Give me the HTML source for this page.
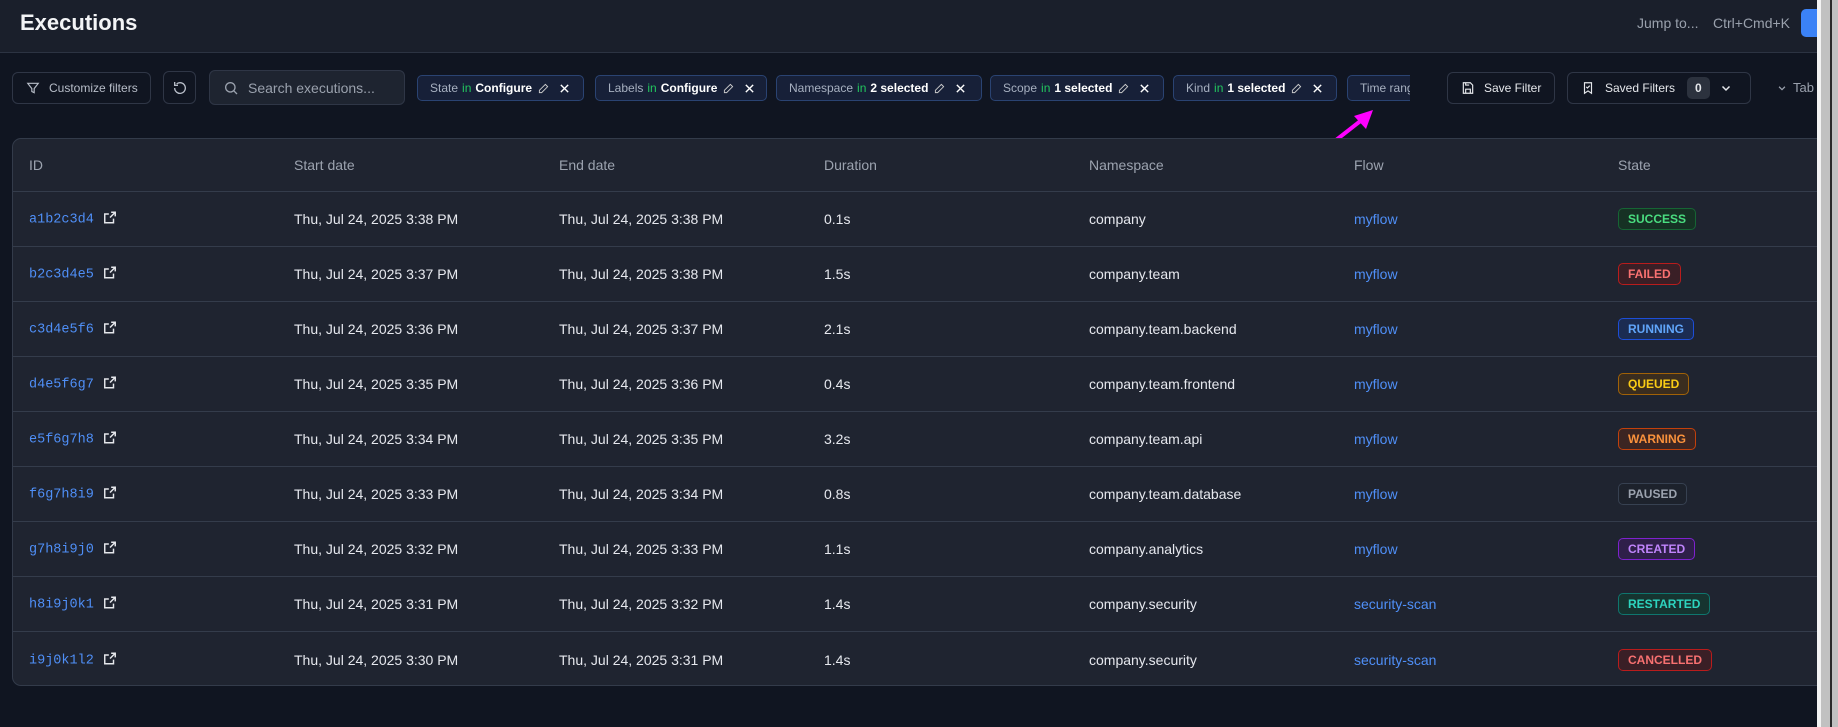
<!DOCTYPE html>
<html><head><meta charset="utf-8"><style>
*{box-sizing:border-box;margin:0;padding:0}
body{width:1838px;height:727px;background:#101521;font-family:"Liberation Sans",sans-serif;color:#e6e8ee;position:relative;overflow:hidden}
.hdr{position:absolute;left:0;top:0;width:1817px;height:53px;background:#1a1f2b;border-bottom:1px solid #2c3342}
.hdr h1{position:absolute;left:20px;top:10px;font-size:22px;font-weight:bold;color:#f3f4f6}
.jump{position:absolute;top:15px;font-size:14px;color:#9aa1ad}
.bluebtn{position:absolute;left:1801px;top:9px;width:20px;height:28px;background:#3b82f6;border-radius:5px 0 0 5px}
.sb{position:absolute;left:1817px;top:0;width:21px;height:727px;background:#c1c1c1;border-left:4px solid #f3f3f3}
.sb:after{content:"";position:absolute;left:9px;top:0;width:2px;height:727px;background:#2a2a2a}
.btn{position:absolute;border:1px solid #2f3646;border-radius:6px;display:flex;align-items:center;font-size:12px;color:#b7bdc8}
.chip{position:absolute;top:75px;height:26px;border:1px solid #2a4372;background:#172038;border-radius:5px;display:flex;align-items:center;padding-left:12px;font-size:12px;color:#a7b0c0;white-space:nowrap;overflow:hidden}
.chip .g{color:#22c55e;margin:0 4px}
.chip b{color:#fff}
.chip svg{margin-left:6px}
.tbl{position:absolute;left:12px;top:138px;width:1830px;height:548px;background:#1f2430;border:1px solid #333b4a;border-radius:9px}
.row{position:absolute;left:0;width:1810px;height:55px;border-bottom:1px solid #343c4b;font-size:14px}
.row span{position:absolute;top:50%;transform:translateY(-50%);white-space:nowrap}
.th{color:#9ca3af}
.id{font-family:"Liberation Mono",monospace;color:#4f8ff7;font-size:13.5px}
.fl{color:#4f8ff7}
.bd{font-size:12px;font-weight:bold;padding:3px 9px;border-radius:5px;border:1px solid}
</style></head><body>
<div class="hdr"><h1>Executions</h1>
<span class="jump" style="left:1637px">Jump to...</span>
<span class="jump" style="left:1713px">Ctrl+Cmd+K</span>
<div class="bluebtn"></div></div>

<div class="btn" style="left:12px;top:72px;width:139px;height:32px;padding-left:13px">
<svg width="14" height="14" viewBox="0 0 24 24" fill="none" stroke="#b7bdc8" stroke-width="2"><path d="M3 4h18l-7 9v7l-4-2v-5z"/></svg><span style="margin-left:9px">Customize filters</span></div>
<div class="btn" style="left:163px;top:71px;width:33px;height:33px;justify-content:center">
<svg width="16" height="16" viewBox="0 0 24 24" fill="none" stroke="#b7bdc8" stroke-width="2"><path d="M4 12a8 8 0 1 0 3-6.2"/><path d="M4 3v5h5"/></svg></div>
<div class="btn" style="left:209px;top:70px;width:196px;height:35px;background:#1e2430;padding-left:13px;font-size:14px;color:#9aa1ad">
<svg width="16" height="16" viewBox="0 0 24 24" fill="none" stroke="#9aa1ad" stroke-width="2"><circle cx="11" cy="11" r="7"/><path d="M16 16l5 5"/></svg><span style="margin-left:9px">Search executions...</span></div>

<div class="chip" style="left:417px;width:167px">State<span class="g">in</span><b>Configure</b><svg width="11" height="11" viewBox="0 0 24 24" fill="none" stroke="#ccc" stroke-width="2"><path d="M16 3l5 5L8 21H3v-5z"/></svg><svg width="11" height="11" viewBox="0 0 24 24" stroke="#fff" stroke-width="3" style="margin-left:10px"><path d="M4 4l16 16M20 4L4 20"/></svg></div>
<div class="chip" style="left:595px;width:172px">Labels<span class="g">in</span><b>Configure</b><svg width="11" height="11" viewBox="0 0 24 24" fill="none" stroke="#ccc" stroke-width="2"><path d="M16 3l5 5L8 21H3v-5z"/></svg><svg width="11" height="11" viewBox="0 0 24 24" stroke="#fff" stroke-width="3" style="margin-left:10px"><path d="M4 4l16 16M20 4L4 20"/></svg></div>
<div class="chip" style="left:776px;width:206px">Namespace<span class="g">in</span><b>2 selected</b><svg width="11" height="11" viewBox="0 0 24 24" fill="none" stroke="#ccc" stroke-width="2"><path d="M16 3l5 5L8 21H3v-5z"/></svg><svg width="11" height="11" viewBox="0 0 24 24" stroke="#fff" stroke-width="3" style="margin-left:10px"><path d="M4 4l16 16M20 4L4 20"/></svg></div>
<div class="chip" style="left:990px;width:174px">Scope<span class="g">in</span><b>1 selected</b><svg width="11" height="11" viewBox="0 0 24 24" fill="none" stroke="#ccc" stroke-width="2"><path d="M16 3l5 5L8 21H3v-5z"/></svg><svg width="11" height="11" viewBox="0 0 24 24" stroke="#fff" stroke-width="3" style="margin-left:10px"><path d="M4 4l16 16M20 4L4 20"/></svg></div>
<div class="chip" style="left:1173px;width:164px">Kind<span class="g">in</span><b>1 selected</b><svg width="11" height="11" viewBox="0 0 24 24" fill="none" stroke="#ccc" stroke-width="2"><path d="M16 3l5 5L8 21H3v-5z"/></svg><svg width="11" height="11" viewBox="0 0 24 24" stroke="#fff" stroke-width="3" style="margin-left:10px"><path d="M4 4l16 16M20 4L4 20"/></svg></div>
<div class="chip" style="left:1347px;width:63px;border-right:none;border-radius:5px 0 0 5px">Time range</div>

<div class="btn" style="left:1447px;top:72px;width:108px;height:32px;padding-left:13px;color:#e5e7eb">
<svg width="14" height="14" viewBox="0 0 24 24" fill="none" stroke="#e5e7eb" stroke-width="2"><path d="M4 3h12l4 4v14H4z"/><path d="M8 21v-7h8v7M8 3v4h6"/></svg><span style="margin-left:9px">Save Filter</span></div>
<div class="btn" style="left:1567px;top:72px;width:184px;height:32px;padding-left:13px;color:#e5e7eb">
<svg width="14" height="14" viewBox="0 0 24 24" fill="none" stroke="#e5e7eb" stroke-width="2"><path d="M6 3h12v18l-6-4-6 4z"/><path d="M9 10l2 2 4-4"/></svg><span style="margin-left:10px">Saved Filters</span>
<span style="margin-left:12px;background:#2c323e;border-radius:5px;padding:4px 8px;font-weight:bold;font-size:12px">0</span>
<svg style="margin-left:10px" width="12" height="12" viewBox="0 0 24 24" fill="none" stroke="#e5e7eb" stroke-width="3"><path d="M5 9l7 7 7-7"/></svg></div>
<svg style="position:absolute;left:1777px;top:83px" width="10" height="10" viewBox="0 0 24 24" fill="none" stroke="#9aa1ad" stroke-width="3"><path d="M5 9l7 7 7-7"/></svg>
<span style="position:absolute;left:1793px;top:80px;font-size:13px;color:#9aa1ad">Tab</span>

<svg style="position:absolute;left:1325px;top:104px" width="55" height="45"><path d="M6 40L38 15" stroke="#ff00ff" stroke-width="4"/><path d="M48 6L29 12L41 25z" fill="#ff00ff"/></svg>

<div class="tbl">
<div class="row th" style="top:0;height:53px"><span style="left:16px">ID</span><span style="left:281px">Start date</span><span style="left:546px">End date</span><span style="left:811px">Duration</span><span style="left:1076px">Namespace</span><span style="left:1341px">Flow</span><span style="left:1605px">State</span></div>
</div>
<div id="rows"></div>
<script>
var d=[["a1b2c3d4","3:38","3:38","0.1s","company","myflow","SUCCESS","#4ade80","#166534","#163124"],
["b2c3d4e5","3:37","3:38","1.5s","company.team","myflow","FAILED","#f87171","#b91c1c","#3a1f26"],
["c3d4e5f6","3:36","3:37","2.1s","company.team.backend","myflow","RUNNING","#60a5fa","#1d4ed8","#1b2c52"],
["d4e5f6g7","3:35","3:36","0.4s","company.team.frontend","myflow","QUEUED","#facc15","#a16207","#3a2d1f"],
["e5f6g7h8","3:34","3:35","3.2s","company.team.api","myflow","WARNING","#fb923c","#c2410c","#3c2522"],
["f6g7h8i9","3:33","3:34","0.8s","company.team.database","myflow","PAUSED","#9ca3af","#374151","#1d222c"],
["g7h8i9j0","3:32","3:33","1.1s","company.analytics","myflow","CREATED","#c084fc","#7e22ce","#2f1f4a"],
["h8i9j0k1","3:31","3:32","1.4s","company.security","security-scan","RESTARTED","#2dd4bf","#0f766e","#163430"],
["i9j0k1l2","3:30","3:31","1.4s","company.security","security-scan","CANCELLED","#f87171","#b91c1c","#3a1f26"]];
var h="";
d.forEach(function(r,i){
h+='<div class="row" style="left:13px;top:'+(192+i*55)+'px;'+(i==8?'border-bottom:none;':'')+'width:1804px">'+
'<span class="id" style="left:16px">'+r[0]+'<svg width="14" height="14" viewBox="0 0 24 24" fill="none" stroke="#e5e7eb" stroke-width="2.5" style="margin-left:9px;vertical-align:-2px"><path d="M14 3h7v7M21 3l-9 9M18 14v7H3V6h7"/></svg></span>'+
'<span style="left:281px">Thu, Jul 24, 2025 '+r[1]+' PM</span><span style="left:546px">Thu, Jul 24, 2025 '+r[2]+' PM</span>'+
'<span style="left:811px">'+r[3]+'</span><span style="left:1076px">'+r[4]+'</span><span class="fl" style="left:1341px">'+r[5]+'</span>'+
'<span class="bd" style="left:1605px;color:'+r[7]+';border-color:'+r[8]+';background:'+r[9]+'">'+r[6]+'</span></div>';});
document.getElementById("rows").innerHTML=h;
</script>
<div class="sb"></div>
</body></html>
